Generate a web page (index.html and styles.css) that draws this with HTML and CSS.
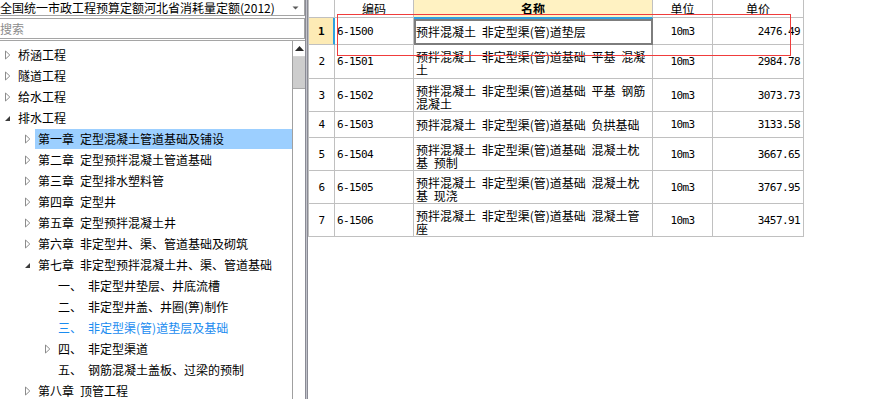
FILE: index.html
```html
<!DOCTYPE html>
<html lang="zh-CN">
<head>
<meta charset="utf-8">
<title>定额</title>
<link rel="stylesheet" href="styles.css">
</head>
<body>
<div class="app">
  <aside class="left">
    <div class="combo">
      <span class="combo-text">全国统一市政工程预算定额河北省消耗量定额(2012)</span>
      <svg class="combo-arrow" width="7" height="4" viewBox="0 0 7 4"><path d="M0.5 0.5 L6.5 0.5 L3.5 3.5 Z" fill="#5a5a5a"/></svg>
    </div>
    <div class="search">搜索</div>
    <div class="tree-wrap">
      <div class="tree">
        <div class="node l0"><span class="tw"><svg class="col" width="7" height="10" viewBox="0 0 7 10"><path d="M1.5 1 L5.8 5 L1.5 9 Z" fill="#fff" stroke="#8c8c8c"/></svg></span><span class="label">桥涵工程</span></div>
        <div class="node l0"><span class="tw"><svg class="col" width="7" height="10" viewBox="0 0 7 10"><path d="M1.5 1 L5.8 5 L1.5 9 Z" fill="#fff" stroke="#8c8c8c"/></svg></span><span class="label">隧道工程</span></div>
        <div class="node l0"><span class="tw"><svg class="col" width="7" height="10" viewBox="0 0 7 10"><path d="M1.5 1 L5.8 5 L1.5 9 Z" fill="#fff" stroke="#8c8c8c"/></svg></span><span class="label">给水工程</span></div>
        <div class="node l0"><span class="tw"><svg class="exp" width="7" height="10" viewBox="0 0 7 10"><path d="M6 3 L6 8 L1 8 Z" fill="#3c3c3c"/></svg></span><span class="label">排水工程</span></div>
        <div class="node l1 sel"><span class="tw"><svg class="col" width="7" height="10" viewBox="0 0 7 10"><path d="M1.5 1 L5.8 5 L1.5 9 Z" fill="#fff" stroke="#8c8c8c"/></svg></span><span class="label"><span class="num">第一章</span>定型混凝土管道基础及铺设</span></div>
        <div class="node l1"><span class="tw"><svg class="col" width="7" height="10" viewBox="0 0 7 10"><path d="M1.5 1 L5.8 5 L1.5 9 Z" fill="#fff" stroke="#8c8c8c"/></svg></span><span class="label"><span class="num">第二章</span>定型预拌混凝土管道基础</span></div>
        <div class="node l1"><span class="tw"><svg class="col" width="7" height="10" viewBox="0 0 7 10"><path d="M1.5 1 L5.8 5 L1.5 9 Z" fill="#fff" stroke="#8c8c8c"/></svg></span><span class="label"><span class="num">第三章</span>定型排水塑料管</span></div>
        <div class="node l1"><span class="tw"><svg class="col" width="7" height="10" viewBox="0 0 7 10"><path d="M1.5 1 L5.8 5 L1.5 9 Z" fill="#fff" stroke="#8c8c8c"/></svg></span><span class="label"><span class="num">第四章</span>定型井</span></div>
        <div class="node l1"><span class="tw"><svg class="col" width="7" height="10" viewBox="0 0 7 10"><path d="M1.5 1 L5.8 5 L1.5 9 Z" fill="#fff" stroke="#8c8c8c"/></svg></span><span class="label"><span class="num">第五章</span>定型预拌混凝土井</span></div>
        <div class="node l1"><span class="tw"><svg class="col" width="7" height="10" viewBox="0 0 7 10"><path d="M1.5 1 L5.8 5 L1.5 9 Z" fill="#fff" stroke="#8c8c8c"/></svg></span><span class="label"><span class="num">第六章</span>非定型井、渠、管道基础及砌筑</span></div>
        <div class="node l1"><span class="tw"><svg class="exp" width="7" height="10" viewBox="0 0 7 10"><path d="M6 3 L6 8 L1 8 Z" fill="#3c3c3c"/></svg></span><span class="label"><span class="num">第七章</span>非定型预拌混凝土井、渠、管道基础</span></div>
        <div class="node l2"><span class="tw"></span><span class="label"><span class="num">一、</span>非定型井垫层、井底流槽</span></div>
        <div class="node l2"><span class="tw"></span><span class="label"><span class="num">二、</span>非定型井盖、井圈(箅)制作</span></div>
        <div class="node l2 cur"><span class="tw"></span><span class="label"><span class="num">三、</span>非定型渠(管)道垫层及基础</span></div>
        <div class="node l2"><span class="tw"><svg class="col" width="7" height="10" viewBox="0 0 7 10"><path d="M1.5 1 L5.8 5 L1.5 9 Z" fill="#fff" stroke="#8c8c8c"/></svg></span><span class="label"><span class="num">四、</span>非定型渠道</span></div>
        <div class="node l2"><span class="tw"></span><span class="label"><span class="num">五、</span>钢筋混凝土盖板、过梁的预制</span></div>
        <div class="node l1"><span class="tw"><svg class="col" width="7" height="10" viewBox="0 0 7 10"><path d="M1.5 1 L5.8 5 L1.5 9 Z" fill="#fff" stroke="#8c8c8c"/></svg></span><span class="label"><span class="num">第八章</span>顶管工程</span></div>
      </div>
      <div class="vscroll">
        <div class="sb-up"><svg width="9" height="5" viewBox="0 0 9 5"><path d="M0 5 L4.5 0 L9 5 Z" fill="#2a2a2a"/></svg></div>
        <div class="sb-thumb"></div>
        <div class="sb-track"></div>
      </div>
    </div>
  </aside>
  <div class="splitter"></div>
  <main class="grid-area">
    <div class="grid">
      <div class="c h"></div>
      <div class="c h">编码</div>
      <div class="c h hn">名称</div>
      <div class="c h">单位</div>
      <div class="c h">单价</div>

      <div class="c rn rcur">1</div>
      <div class="c code">6-1500</div>
      <div class="c name edit">预拌混凝土 非定型渠(管)道垫层</div>
      <div class="c unit">10m3</div>
      <div class="c price">2476.49</div>

      <div class="c rn">2</div>
      <div class="c code">6-1501</div>
      <div class="c name ml"><span class="ln">预拌混凝土 非定型渠(管)道基础 平基 混凝</span><span class="ln">土</span></div>
      <div class="c unit">10m3</div>
      <div class="c price">2984.78</div>

      <div class="c rn">3</div>
      <div class="c code">6-1502</div>
      <div class="c name ml"><span class="ln">预拌混凝土 非定型渠(管)道基础 平基 钢筋</span><span class="ln">混凝土</span></div>
      <div class="c unit">10m3</div>
      <div class="c price">3073.73</div>

      <div class="c rn">4</div>
      <div class="c code">6-1503</div>
      <div class="c name">预拌混凝土 非定型渠(管)道基础 负拱基础</div>
      <div class="c unit">10m3</div>
      <div class="c price">3133.58</div>

      <div class="c rn">5</div>
      <div class="c code">6-1504</div>
      <div class="c name ml"><span class="ln">预拌混凝土 非定型渠(管)道基础 混凝土枕</span><span class="ln">基 预制</span></div>
      <div class="c unit">10m3</div>
      <div class="c price">3667.65</div>

      <div class="c rn">6</div>
      <div class="c code">6-1505</div>
      <div class="c name ml"><span class="ln">预拌混凝土 非定型渠(管)道基础 混凝土枕</span><span class="ln">基 现浇</span></div>
      <div class="c unit">10m3</div>
      <div class="c price">3767.95</div>

      <div class="c rn">7</div>
      <div class="c code">6-1506</div>
      <div class="c name ml"><span class="ln">预拌混凝土 非定型渠(管)道基础 混凝土管</span><span class="ln">座</span></div>
      <div class="c unit">10m3</div>
      <div class="c price">3457.91</div>
    </div>
  </main>
</div>
<div class="annot"></div>
</body>
</html>
```

FILE: styles.css
```css
* { box-sizing: border-box; margin: 0; padding: 0; }
html, body { width: 875px; height: 399px; overflow: hidden; background: #fff; }
body {
  font-family: "Noto Sans CJK SC", "Noto Sans", sans-serif;
  font-size: 12px;
  color: #000;
  position: relative;
}
.app { display: flex; height: 399px; }

/* left panel */
.left { width: 305px; flex: none; display: flex; flex-direction: column; }
.combo {
  height: 16px;
  border-right: 1px solid #a5a5a5;
  border-bottom: 1px solid #a5a5a5;
  display: flex;
  align-items: center;
  justify-content: space-between;
  padding-right: 5px;
  white-space: nowrap;
  line-height: 15px;
}
.search {
  margin-top: 2px;
  height: 21px;
  border: 1px solid #a5a5a5;
  border-left: none;
  line-height: 19px;
  color: #8c8c8c;
}
.tree-wrap {
  margin-top: 1px;
  flex: 1;
  min-height: 0;
  display: flex;
  border-top: 1px solid #a5a5a5;
}
.tree { flex: 1; padding-top: 3px; overflow: hidden; }
.node {
  height: 21px;
  display: flex;
  align-items: flex-end;
  white-space: nowrap;
  word-spacing: 3px;
}
.node.l1 { padding-left: 20px; }
.node.l2 { padding-left: 40px; }
.tw {
  width: 18px;
  flex: none;
  align-self: center;
  display: flex;
  align-items: center;
  padding-left: 4px;
  height: 10px;
}
.label { height: 20px; line-height: 20px; }
.num { margin-right: 6px; }
.sel .label { background: #9ccfff; margin-left: -3px; padding-left: 3px; flex: 1; }
.cur .label { color: #1a8cf0; }

.vscroll {
  width: 13px;
  flex: none;
  border-left: 1px solid #a0a0a0;
  display: flex;
  flex-direction: column;
}
.sb-up {
  height: 16px;
  display: flex;
  align-items: center;
  justify-content: center;
  border-bottom: 1px solid #d4d4d4;
}
.sb-thumb { height: 32px; background: #cdcdcd; border-bottom: 1px solid #a8a8a8; }
.sb-track { flex: 1; }

.splitter {
  width: 3px;
  flex: none;
  background: #c2c3ca;
  border-left: 1px solid #8a8b95;
  border-right: 1px solid #8a8b95;
}

/* grid */
.grid-area { flex: 1; }
.grid {
  display: grid;
  grid-template-columns: 26px 79px 239px 60px 91px;
  grid-template-rows: 18px 27px 34px 33px 26px 33px 33px 33px;
  width: max-content;
  border-left: 1px solid #c0c0c0;
}
.c {
  border-right: 1px solid #c0c0c0;
  border-bottom: 1px solid #c0c0c0;
  display: flex;
  align-items: center;
  white-space: nowrap;
  overflow: hidden;
}
.h { justify-content: center; line-height: 16px; }
.hn { background: #fff2c2; font-weight: bold; border-bottom: 1px solid #2f9ee0; }
.rn, .code, .unit, .price {
  font-family: "DejaVu Sans Mono", "Liberation Mono", monospace;
  font-size: 11px;
  letter-spacing: -0.6px;
}
.rn { justify-content: center; }
.rcur { background: #fdebb5; font-weight: bold; border-right: 2px solid #2f9ee0; }
.code { padding-left: 2px; }
.name { padding-left: 2px; word-spacing: 3px; }
.name.ml {
  flex-direction: column;
  align-items: flex-start;
  justify-content: flex-start;
  padding-top: 5px;
}
.ln { display: block; height: 13px; line-height: 13px; }
.edit {
  border-top: 1px solid #2f9ee0;
  border-right: 2px solid #7d7d7d;
  border-bottom: 2px solid #7d7d7d;
  box-shadow: inset 2px 0 0 #7d7d7d, inset 0 2px 0 #7d7d7d;
}
.unit { justify-content: center; }
.price { justify-content: flex-end; padding-right: 3px; }

/* red annotation frame drawn over the grid */
.annot {
  position: absolute;
  left: 337px;
  top: 14px;
  width: 454px;
  height: 42px;
  border: 1px solid #f03c3c;
  pointer-events: none;
}
```
